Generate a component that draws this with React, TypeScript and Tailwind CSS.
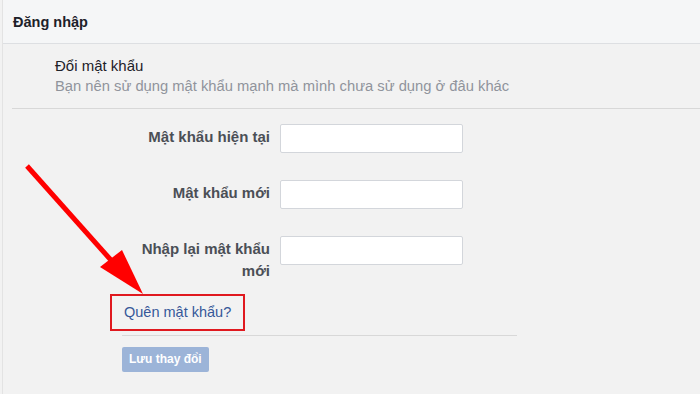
import React from "react";

function Row({ label, children }: { label: React.ReactNode; children?: React.ReactNode }) {
  return (
    <div className="flex items-start">
      <div className="w-[267px] text-right text-[15px] font-bold leading-[22px] text-[#4b4f56] pt-[2px]">
        {label}
      </div>
      <div className="pl-[10px]">
        <div className="h-[29px] w-[183px] rounded-[2px] border border-[#d3d6db] bg-white" />
      </div>
    </div>
  );
}

export default function App() {
  return (
    <div
      className="relative h-[394px] w-[700px] overflow-hidden bg-[#f2f2f2]"
      style={{ fontFamily: '"Liberation Sans", Arial, sans-serif' }}
    >
      <div className="ml-[2px] h-full border-l border-[#e3e3e3]">
        <div className="flex h-[44px] items-center border-b border-[#dddfe2] bg-[#f5f6f7] pl-[10px] pt-[2px]">
          <span className="text-[14.5px] font-bold text-[#1d2129]">Đăng nhập</span>
        </div>
        <div className="pl-[52px] pt-[12px]">
          <div className="text-[15px] leading-[20px] text-[#1d2129]">Đổi mật khẩu</div>
          <div className="text-[14.75px] leading-[20px] text-[#90949c]">
            Bạn nên sử dụng mật khẩu mạnh mà mình chưa sử dụng ở đâu khác
          </div>
        </div>
        <div className="ml-[9px] mt-[12px] border-t border-[#d8d8d8]" />
        <div className="mt-[15px] flex flex-col gap-[27px]">
          <Row label="Mật khẩu hiện tại" />
          <Row label="Mật khẩu mới" />
          <Row
            label={
              <>
                Nhập lại mật khẩu
                <br />
                mới
              </>
            }
          />
        </div>
        <div className="ml-[107px] mt-[12px]">
          <div className="inline-block border-2 border-[#e0191f] px-[12px] py-[6px] text-[14.5px] leading-[21px] text-[#365899]">
            Quên mật khẩu?
          </div>
        </div>
        <div className="ml-[119px] mt-[4px] w-[395px] border-t border-[#d8d8d8]" />
        <div className="ml-[119px] mt-[10px]">
          <div className="inline-flex h-[25px] items-center rounded-[2px] bg-[#9cb4d8] px-[7px] text-[12px] font-bold text-white">
            Lưu thay đổi
          </div>
        </div>
      </div>
      <svg className="pointer-events-none absolute left-0 top-0" width="700" height="394">
        <line x1="27" y1="166" x2="118" y2="268" stroke="#ff0000" strokeWidth="5" strokeLinecap="butt" />
        <polygon points="143,294 100,267 122,250" fill="#ff0000" />
      </svg>
    </div>
  );
}
